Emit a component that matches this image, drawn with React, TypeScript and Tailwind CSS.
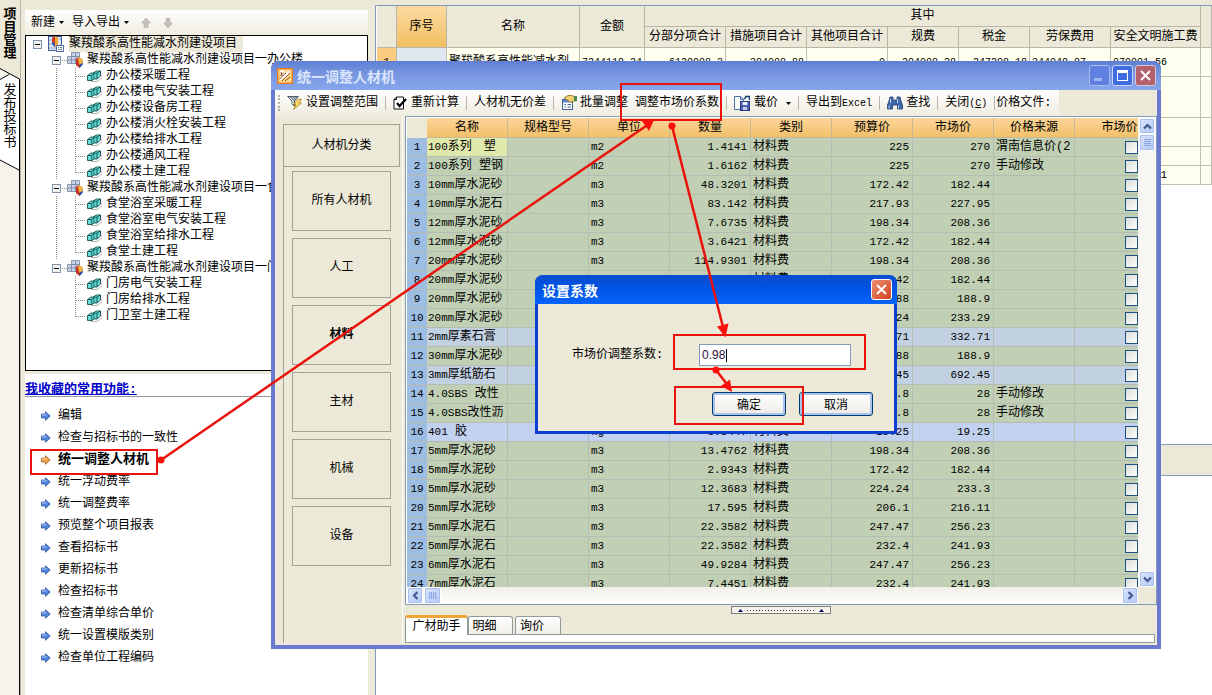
import { Fragment, type ReactNode } from "react";

type Row = {
  pre: string;
  name: string;
  unit: string;
  qty: string;
  budget: string;
  market: string;
  source?: string;
  tone?: "blue" | "sky";
};

const rows: Row[] = [
  { pre: "100",    name: "系列　塑",   unit: "m2", qty: "1.4141",   budget: "225",    market: "270",    source: "渭南信息价(2" },
  { pre: "100",    name: "系列 塑钢",  unit: "m2", qty: "1.6162",   budget: "225",    market: "270",    source: "手动修改" },
  { pre: "10mm",   name: "厚水泥砂",   unit: "m3", qty: "48.3201",  budget: "172.42", market: "182.44" },
  { pre: "10mm",   name: "厚水泥石",   unit: "m3", qty: "83.142",   budget: "217.93", market: "227.95" },
  { pre: "12mm",   name: "厚水泥砂",   unit: "m3", qty: "7.6735",   budget: "198.34", market: "208.36" },
  { pre: "12mm",   name: "厚水泥砂",   unit: "m3", qty: "3.6421",   budget: "172.42", market: "182.44" },
  { pre: "20mm",   name: "厚水泥砂",   unit: "m3", qty: "114.9301", budget: "198.34", market: "208.36" },
  { pre: "20mm",   name: "厚水泥砂",   unit: "m3", qty: "25.3072",  budget: "172.42", market: "182.44" },
  { pre: "20mm",   name: "厚水泥砂",   unit: "m3", qty: "18.2214",  budget: "178.88", market: "188.9" },
  { pre: "20mm",   name: "厚水泥砂",   unit: "m3", qty: "6.4103",   budget: "224.24", market: "233.29" },
  { pre: "2mm",    name: "厚素石膏",   unit: "m3", qty: "1.2086",   budget: "332.71", market: "332.71", tone: "blue" },
  { pre: "30mm",   name: "厚水泥砂",   unit: "m3", qty: "9.7731",   budget: "178.88", market: "188.9" },
  { pre: "3mm",    name: "厚纸筋石",   unit: "m3", qty: "2.1150",   budget: "692.45", market: "692.45", tone: "blue" },
  { pre: "4.0SBS", name: " 改性",      unit: "m2", qty: "342.108",  budget: "26.8",   market: "28",     source: "手动修改" },
  { pre: "4.0SBS", name: "改性沥",     unit: "m2", qty: "518.226",  budget: "26.8",   market: "28",     source: "手动修改" },
  { pre: "401",    name: " 胶",        unit: "kg", qty: "3.5447",   budget: "19.25",  market: "19.25",  tone: "sky" },
  { pre: "5mm",    name: "厚水泥砂",   unit: "m3", qty: "13.4762",  budget: "198.34", market: "208.36" },
  { pre: "5mm",    name: "厚水泥砂",   unit: "m3", qty: "2.9343",   budget: "172.42", market: "182.44" },
  { pre: "5mm",    name: "厚水泥砂",   unit: "m3", qty: "12.3683",  budget: "224.24", market: "233.3" },
  { pre: "5mm",    name: "厚水泥砂",   unit: "m3", qty: "17.595",   budget: "206.1",  market: "216.11" },
  { pre: "5mm",    name: "厚水泥石",   unit: "m3", qty: "22.3582",  budget: "247.47", market: "256.23" },
  { pre: "5mm",    name: "厚水泥石",   unit: "m3", qty: "22.3582",  budget: "232.4",  market: "241.93" },
  { pre: "6mm",    name: "厚水泥石",   unit: "m3", qty: "49.9284",  budget: "247.47", market: "256.23" },
  { pre: "7mm",    name: "厚水泥石",   unit: "m3", qty: "7.4451",   budget: "232.4",  market: "241.93" },
];

const tones = {
  green: "bg-[#c1d0b4]",
  blue: "bg-[#c2d1e2]",
  sky: "bg-[#c1d1ef]",
};

const tree = [
  { title: "聚羧酸系高性能减水剂建设项目一办公楼", leaves: ["办公楼采暖工程", "办公楼电气安装工程", "办公楼设备房工程", "办公楼消火栓安装工程", "办公楼给排水工程", "办公楼通风工程", "办公楼土建工程"] },
  { title: "聚羧酸系高性能减水剂建设项目一食堂",   leaves: ["食堂浴室采暖工程", "食堂浴室电气安装工程", "食堂浴室给排水工程", "食堂土建工程"] },
  { title: "聚羧酸系高性能减水剂建设项目一门房",   leaves: ["门房电气安装工程", "门房给排水工程", "门卫室土建工程"] },
];

const favourites = ["编辑", "检查与招标书的一致性", "统一调整人材机", "统一浮动费率", "统一调整费率", "预览整个项目报表", "查看招标书", "更新招标书", "检查招标书", "检查清单综合单价", "统一设置模版类别", "检查单位工程编码"];

const categories = ["所有人材机", "人工", "材料", "主材", "机械", "设备"];

const gridHeads = ["名称", "规格型号", "单位", "数量", "类别", "预算价", "市场价", "价格来源", "市场价锁定"];

const subHeads = ["分部分项合计", "措施项目合计", "其他项目合计", "规费", "税金", "劳保费用", "安全文明施工费"];

/* ---------- small drawings ---------- */

function Caret() {
  return <svg width="5" height="3" viewBox="0 0 5 3" aria-hidden="true"><path d="M0 0h5L2.5 3z" fill="#000" /></svg>;
}

function FatArrow({ down }: { down?: boolean }) {
  return (
    <svg width="10" height="10" viewBox="0 0 10 10" aria-hidden="true" className={down ? "rotate-180" : ""}>
      <path d="M5 0l4.500 5H7v4.500H3V5H.5z" fill="#c3c1b8" stroke="#aeaca2" strokeWidth=".6" />
    </svg>
  );
}

function Expander() {
  return (
    <svg width="9" height="9" viewBox="0 0 9 9" className="shrink-0" aria-hidden="true">
      <rect x=".5" y=".5" width="8" height="8" fill="#f4f2ec" stroke="#7f93ad" />
      <path d="M2 4.500h5" stroke="#000" />
    </svg>
  );
}

function Dots() {
  return <svg width="6" height="1" viewBox="0 0 6 1" className="shrink-0" aria-hidden="true"><path d="M1 .5h5" stroke="#888" strokeDasharray="1 1" /></svg>;
}

function Guides({ outer, last }: { outer: boolean; last: boolean }) {
  return (
    <svg width="31" height="16" viewBox="0 0 31 16" className="shrink-0" aria-hidden="true">
      {outer && <path d="M.5 0v16" stroke="#888" strokeDasharray="1 1" />}
      <path d={last ? "M19.500 0v9" : "M19.500 0v16"} stroke="#888" strokeDasharray="1 1" />
      <path d="M20 8.500h10" stroke="#888" strokeDasharray="1 1" />
    </svg>
  );
}

function RootIcon() {
  return (
    <svg width="16" height="16" viewBox="0 0 16 16" className="shrink-0" aria-hidden="true">
      <rect x=".5" y=".5" width="13" height="14" fill="#dfe7f5" stroke="#3d5c94" />
      <path d="M1 4h3M1 8h3M1 12h8M11 3h2" stroke="#8aa3cf" />
      <path d="M4 2l3-2 3 2v6l-3 3-3-3z" fill="#d33b22" />
      <path d="M7 0l3 2v6l-3 3z" fill="#f0a92e" />
      <path d="M4 6l3 1v4L4 8z" fill="#2f57b5" />
      <rect x="8.500" y="9.500" width="7" height="6" fill="#fff" stroke="#54709f" />
      <path d="M10 11.500h1M12 11.500h2M10 13.500h1M12 13.500h2" stroke="#54709f" />
    </svg>
  );
}

function GroupIcon() {
  return (
    <svg width="16" height="16" viewBox="0 0 16 16" className="shrink-0" aria-hidden="true">
      <path d="M4.500.5h8v11h-12v-7h4z" fill="#c9d3e4" stroke="#8c9bb5" />
      <path d="M4.500 4.500h8M.5 8h12M4.500 4v8M8.500 1v11" stroke="#7f8fab" />
      <path d="M12 5l3.500 2.500v5L12.500 16 9 13V7z" fill="#c62f1c" />
      <path d="M12 5l3.500 2.500v4L12.500 13 11 8z" fill="#f2b63a" />
      <path d="M12.500 12.500l3-1.500v2l-3 3z" fill="#2d4fae" />
    </svg>
  );
}

function LeafIcon() {
  return (
    <svg width="15" height="12" viewBox="0 0 15 12" className="shrink-0" aria-hidden="true">
      <path d="M4 11.500h6l5-3.500v-4" fill="none" stroke="#b5b5b5" />
      <path d="M.5 5.500L4 3h2l3.500-2h4v5L10 9H7l-2 1.500H.5z" fill="#5fdad6" stroke="#0b3d3d" strokeWidth=".8" />
      <path d="M.5 5.500h4.300v5M4.800 5.500L8 3.500M6 3.200h4L13.500 1M10 3.200V9M7 5.500v3.500" fill="none" stroke="#0b3d3d" strokeWidth=".8" />
    </svg>
  );
}

function ItemArrow({ hot }: { hot?: boolean }) {
  return (
    <svg width="10" height="10" viewBox="0 0 10 10" className="shrink-0" aria-hidden="true">
      <path d="M.5 3h4V.7L9.300 5 4.500 9.300V7h-4z" fill={hot ? "#f0a04a" : "#5384dc"} stroke={hot ? "#a8672a" : "#3257a8"} strokeWidth=".8" />
      <path d="M1 4h4V3" fill="none" stroke={hot ? "#fbd9a8" : "#a9c6f7"} />
    </svg>
  );
}

function AppIcon() {
  return (
    <svg width="16" height="16" viewBox="0 0 16 16" aria-hidden="true">
      <rect x=".7" y=".7" width="14.600" height="14.600" fill="#fbd98a" stroke="#e8781a" strokeWidth="1.400" />
      <path d="M3 3l4-1 1 4 3-3 2 1-4 6-6 2z" fill="#fff" />
      <path d="M2.500 11L9 5M5 13l8-8M4 4l1 4M2.500 8l4-3M8 13l5-4" stroke="#9c4512" />
    </svg>
  );
}

function FilterIcon() {
  return (
    <svg width="16" height="16" viewBox="0 0 16 16" aria-hidden="true">
      <path d="M.7 1.500h10.600L7.500 6v5L5 9V6z" fill="#9aa6b2" stroke="#4b5763" />
      <path d="M2.500 2.500L6 6v3" fill="none" stroke="#fff" />
      <path d="M10.500 4.500h4L11.500 8h3L6.500 14.500l2.500-5H7z" fill="#ffe36b" stroke="#a87f12" strokeWidth=".8" />
    </svg>
  );
}

function CheckDocIcon() {
  return (
    <svg width="14" height="14" viewBox="0 0 14 14" aria-hidden="true">
      <path d="M1 3.500L3.500 1h7v12H1z" fill="#fff" stroke="#111" />
      <path d="M3.500 1v2.500H1" fill="none" stroke="#111" />
      <path d="M4 7l2.500 3L13 3" fill="none" stroke="#000" strokeWidth="2.200" />
    </svg>
  );
}

function BatchIcon() {
  return (
    <svg width="16" height="16" viewBox="0 0 16 16" aria-hidden="true">
      <rect x="1.500" y="4.500" width="10" height="10" fill="#fff" stroke="#3e6494" />
      <rect x="2" y="5" width="9" height="2.500" fill="#5d8cc9" />
      <path d="M3.500 9.500h1.500M6.500 9.500h3.500M3.500 12h1.500M6.500 12h3.500" stroke="#3e6494" />
      <path d="M3 3l4-2.500h4l2 1h2.500V6H12l-2 1.500-3-2z" fill="#f3cf74" stroke="#8d6a1b" strokeWidth=".8" />
      <rect x="13" y="1" width="3" height="5" fill="#4d8f4a" />
    </svg>
  );
}

function LoadIcon() {
  return (
    <svg width="16" height="16" viewBox="0 0 16 16" aria-hidden="true">
      <path d="M.5 1.500h6l3 3v10h-9z" fill="#fff" stroke="#4570ab" />
      <path d="M6.500 1.500v3h3" fill="none" stroke="#4570ab" />
      <path d="M11 1.500h4.500V5M10 4l3-3" stroke="#1d3d7a" strokeWidth="1.500" fill="none" />
      <rect x="6.500" y="6.500" width="9" height="9" fill="#4c5fb3" stroke="#28377d" />
      <rect x="8.500" y="7" width="5" height="3" fill="#e8ecf8" />
      <rect x="9" y="12" width="4" height="3" fill="#c9cfe8" />
    </svg>
  );
}

function BinocularsIcon() {
  return (
    <svg width="16" height="16" viewBox="0 0 16 16" aria-hidden="true">
      <path d="M3 2h3v3h4V2h3l1 4 1.500 4v4h-5v-4h-5v4h-5v-4L2 6z" fill="#4069ad" stroke="#1f3a70" strokeWidth=".8" />
      <path d="M3.500 4v4M2 10.500v3M10.500 4v4M11.500 10.500v3" stroke="#b9d2f5" />
    </svg>
  );
}

function Chevron({ d }: { d: string }) {
  return <svg width="9" height="9" viewBox="0 0 9 9" aria-hidden="true"><path d={d} fill="none" stroke="#41598c" strokeWidth="2.200" /></svg>;
}

// Narrow run of latin letters or digits inside a Chinese label
function Latin({ children }: { children: ReactNode }) {
  return <span className="text-[11px]">{children}</span>;
}

/* ---------- background application ---------- */

function SideRail() {
  return (
    <nav className="relative w-5 shrink-0 bg-[#f5f3eb]">
      <svg width="20" height="695" viewBox="0 0 20 695" className="absolute top-0 left-0" aria-hidden="true">
        <path d="M0 0h20v79L0 68z" fill="#ece9d8" />
        <path d="M0 79l9-4 10 4v91L0 160z" fill="#fff" />
        <path d="M0 68.500l19.500 10.500V695M0 79.500l9-5M0 160l19 10" fill="none" stroke="#000" />
      </svg>
      <div className="relative flex flex-col items-center gap-6 pt-2">
        <button className="w-[13px] text-[13px] leading-[13px] font-bold break-all">项目管理</button>
        <button className="w-[13px] text-[13px] leading-[13px] break-all">发布投标书</button>
      </div>
    </nav>
  );
}

function ProjectPanel() {
  return (
    <aside className="flex w-[348px] shrink-0 flex-col border-l border-[#b8b4a4] bg-[#ece9d8] pl-1">
      <div className="flex h-[10px] items-end justify-center overflow-hidden pb-2 pr-4 leading-4">项目管理</div>
      <div className="flex h-[25px] items-center gap-2 bg-linear-to-b from-white to-[#efecdf] pl-[6px]">
        <button className="flex items-center gap-1">新建 <Caret /></button>
        <button className="flex items-center gap-1">导入导出 <Caret /></button>
        <button aria-label="上移" className="pl-1"><FatArrow /></button>
        <button aria-label="下移" className="pl-1"><FatArrow down /></button>
      </div>

      <div className="h-[336px] overflow-hidden border border-black bg-white leading-4 whitespace-nowrap">
        <div className="flex h-4 items-center gap-[6px] pl-[7px]">
          <Expander />
          <RootIcon />
          <span className="-ml-px bg-[#ece9d8] pr-[6px]">聚羧酸系高性能减水剂建设项目</span>
        </div>
        {tree.map((group, g) => (
          <Fragment key={group.title}>
            <div className="flex h-4 items-center pl-[26px]">
              <Expander />
              <Dots />
              <GroupIcon />
              <span className="pl-1">{group.title}</span>
            </div>
            {group.leaves.map((leaf, i) => (
              <div key={leaf} className="flex h-4 items-center pl-[30px]">
                <Guides outer={g < tree.length - 1} last={i === group.leaves.length - 1} />
                <LeafIcon />
                <span className="pl-1">{leaf}</span>
              </div>
            ))}
          </Fragment>
        ))}
      </div>

      <section className="mt-[3px] grow bg-white">
        <h2 className="h-[23px] border-b border-[#999] pt-[8px] text-[13px] leading-4 font-bold text-[#0000c8]">
          <a href="#fav" className="underline">我收藏的常用功能:</a>
        </h2>
        <ul className="pt-2">
          {favourites.map((item) => {
            const hot = item === "统一调整人材机";
            return (
              <li key={item}>
                <a href="#fav" className="flex h-[22px] items-center gap-[7px] pl-4">
                  <ItemArrow hot={hot} />
                  <span className={hot ? "text-[13px] font-bold" : ""}>{item}</span>
                </a>
              </li>
            );
          })}
        </ul>
      </section>
    </aside>
  );
}

const headCell = "border-r border-b border-[#b9b6a8] p-0 font-normal";
const backCell = "border-r border-b border-[#c0c0b0] p-0";

function SummaryTable() {
  return (
    <table className="w-full table-fixed border-separate border-spacing-0 bg-[#fffff0]">
      <colgroup>
        <col className="w-[20px]" />
        <col className="w-[50px]" />
        <col className="w-[133px]" />
        <col className="w-[65px]" />
        <col className="w-[81px]" />
        <col className="w-[81px]" />
        <col className="w-[81px]" />
        <col className="w-[71px]" />
        <col className="w-[71px]" />
        <col className="w-[81px]" />
        <col className="w-[90px]" />
        <col />
      </colgroup>
      <thead className="bg-[#ece9d8]">
        <tr className="h-[21px]">
          <th rowSpan={2} className={headCell} />
          <th rowSpan={2} className={`${headCell} bg-linear-to-b from-[#fcd9a0] to-[#f0c060]`}>序号</th>
          <th rowSpan={2} className={headCell}>名称</th>
          <th rowSpan={2} className={headCell}>金额</th>
          <th colSpan={7} className={headCell}>其中</th>
          <th rowSpan={2} className={headCell} />
        </tr>
        <tr className="h-[21px] whitespace-nowrap">
          {subHeads.map((h) => <th key={h} className={headCell}>{h}</th>)}
        </tr>
      </thead>
      <tbody>
        <tr className="h-[29px]">
          <th className={`${headCell} bg-[#fbcb80]`}><Latin>1</Latin></th>
          <td className={`${backCell} bg-[#dfe8ee]`} />
          <td className={`${backCell} pl-[2px] leading-[14px]`}>聚羧酸系高性能减水剂</td>
          {["7244119.24", "6120008.3", "304008.88", "0", "204008.28", "247208.18", "344049.07", "870001.56"].map((v, i) => (
            <td key={v} className={`${backCell} px-[2px] text-[10px] ${i < 6 ? "text-right" : "text-left"}`}>{v}</td>
          ))}
          <td className={backCell} />
        </tr>
        {["h-[41px]", "h-[29px]", "h-[19px]", "h-[19px]"].map((h, r) => (
          <tr key={r} className={h}>
            {Array.from({ length: 12 }, (_, c) => (
              <td key={c} className={`${backCell} ${c === 10 ? "pr-[33px] text-right" : ""}`}>{r === 3 && c === 10 ? <Latin>1</Latin> : null}</td>
            ))}
          </tr>
        ))}
      </tbody>
    </table>
  );
}

/* ---------- adjust window ---------- */

function Sep() {
  return <span className="h-[14px] w-px bg-[#b9b6a6]" />;
}

function Toolbar() {
  return (
    <div className="flex h-[26px] bg-[#ece9d8]">
      <div className="flex items-center gap-[7px] bg-linear-to-b from-white to-[#efecdf] pr-2 pl-[3px] whitespace-nowrap">
        <span className="h-4 w-[2px] border-l-2 border-dotted border-[#b5b2a3]" />
        <button className="flex items-center gap-[3px]"><FilterIcon />设置调整范围</button>
        <Sep />
        <button className="flex items-center gap-1"><CheckDocIcon />重新计算</button>
        <Sep />
        <button>人材机无价差</button>
        <Sep />
        <button className="flex items-center gap-[3px]"><BatchIcon />批量调整</button>
        <button>调整市场价系数</button>
        <Sep />
        <button className="flex items-center gap-1"><LoadIcon />载价 <span className="pl-1"><Caret /></span></button>
        <Sep />
        <button>导出到<span className="text-[10px]">Excel</span></button>
        <Sep />
        <button className="flex items-center gap-[3px]"><BinocularsIcon />查找</button>
        <Sep />
        <button>关闭<span className="text-[10px]">(<u>C</u>)</span></button>
        <span className="flex items-center gap-px"><Sep />价格文件:</span>
      </div>
    </div>
  );
}

function CategoryPanel() {
  return (
    <div className="flex w-[128px] shrink-0 border-r border-white pt-2 pl-2">
      <div className="flex grow flex-col border-l border-[#a5a294]">
        <button className="mr-[2px] h-[43px] border border-l-0 border-[#a5a294]">人材机分类</button>
        <div className="flex flex-col gap-[7px] pt-1 pr-[11px] pl-2">
          {categories.map((c) => (
            <button key={c} className={`h-[60px] border border-[#a5a294] ${c === "材料" ? "font-bold" : ""}`}>{c}</button>
          ))}
        </div>
      </div>
    </div>
  );
}

const scrollBtn = "flex items-center justify-center rounded-[2px] border border-white bg-linear-to-br from-[#dbe6fd] to-[#b4c8f6] ring-1 ring-[#a9bfee] ring-inset";
const cell = "overflow-hidden border-r border-b border-[#b4bcb4] p-0 whitespace-nowrap";

function MaterialGrid() {
  return (
    <div className="border border-[#7f9db9] bg-white pt-px pl-px">
      <div className="flex h-[469px]">
        <div className="min-w-0 grow overflow-hidden">
          <table className="w-[782px] table-fixed border-separate border-spacing-0 leading-[14px]">
            <colgroup>
              <col className="w-5" />
              {gridHeads.slice(0, 8).map((h) => <col key={h} className="w-[81px]" />)}
              <col className="w-[114px]" />
            </colgroup>
            <thead>
              <tr className="h-5">
                <th className="bg-[#ece9d8] p-0" />
                {gridHeads.map((h) => (
                  <th key={h} className="border-r border-b border-[#c9b896] bg-linear-to-b from-[#fbd59a] to-[#f2c068] p-0 font-normal">{h}</th>
                ))}
              </tr>
            </thead>
            <tbody>
              {rows.map((r, i) => (
                <tr key={i} className={`h-[19px] ${tones[r.tone ?? "green"]}`}>
                  <th className="border-b border-[#b4bcb4] bg-[#9dbde3] p-0 text-[11px] font-normal">{i + 1}</th>
                  <td className={`${cell} pl-px ${i === 0 ? "bg-[#e0e9ac]" : ""}`}><Latin>{r.pre}</Latin>{r.name}</td>
                  <td className={cell} />
                  <td className={`${cell} pl-[2px] text-[11px]`}>{r.unit}</td>
                  <td className={`${cell} pr-[3px] text-right text-[11px]`}>{r.qty}</td>
                  <td className={`${cell} pl-[2px]`}>材料费</td>
                  <td className={`${cell} pr-[3px] text-right text-[11px]`}>{r.budget}</td>
                  <td className={`${cell} pr-[3px] text-right text-[11px]`}>{r.market}</td>
                  <td className={`${cell} pl-[2px]`}>{r.source}</td>
                  <td className={`${cell} text-center`}>
                    <input type="checkbox" aria-label={`锁定第${i + 1}行`} className="mx-auto block size-[13px] appearance-none border border-[#1c5180] bg-linear-to-br from-[#dcdcd7] to-white" />
                  </td>
                </tr>
              ))}
            </tbody>
          </table>
        </div>
        <div className="flex w-[18px] shrink-0 flex-col bg-[#f7f6f2] px-px">
          <button aria-label="向上" className={`${scrollBtn} h-4`}><Chevron d="M1 6.500l3.500-3.500L8 6.500" /></button>
          <span className={`${scrollBtn} h-[17px]`}>
            <svg width="7" height="8" viewBox="0 0 7 8" aria-hidden="true"><path d="M0 .5h7M0 2.500h7M0 4.500h7M0 6.500h7" stroke="#8aa5e6" /></svg>
          </span>
          <button aria-label="向下" className={`${scrollBtn} mt-auto h-4`}><Chevron d="M1 2.500L4.500 6 8 2.500" /></button>
        </div>
      </div>
      <div className="flex h-[17px]">
        <div className="flex grow gap-px bg-linear-to-b from-[#f1efe8] to-white">
          <button aria-label="向左" className={`${scrollBtn} w-4`}><Chevron d="M6.500 1L3 4.500 6.500 8" /></button>
          <span className={`${scrollBtn} w-[17px]`}>
            <svg width="8" height="7" viewBox="0 0 8 7" aria-hidden="true"><path d="M.5 0v7M2.500 0v7M4.500 0v7M6.500 0v7" stroke="#8aa5e6" /></svg>
          </span>
          <button aria-label="向右" className={`${scrollBtn} ml-auto w-4`}><Chevron d="M2.500 1L6 4.500 2.500 8" /></button>
        </div>
        <div className="w-[18px] bg-[#ece9d8]" />
      </div>
    </div>
  );
}

function BottomTabs() {
  return (
    <>
      <div className="flex h-[10px] items-center justify-center">
        <button aria-label="展开" className="flex h-2 w-[100px] items-center justify-center border border-[#808080] bg-[#f4f2ea]">
          <svg width="86" height="4" viewBox="0 0 86 4" aria-hidden="true">
            <path d="M0 4l2.500-3L5 4zM81 4l2.500-3L86 4z" fill="#00005a" />
            <path d="M9 2.500h68" stroke="#333" strokeDasharray="1 2" />
          </svg>
        </button>
      </div>
      <div className="flex items-end">
        <button className="-mb-px h-5 w-[63px] rounded-t-[3px] border border-t-[3px] border-b-0 border-[#919b9c] border-t-[#f0a536] bg-white leading-4">广材助手</button>
        <button className="mr-[2px] h-[18px] w-[45px] rounded-t-[3px] border border-b-0 border-[#919b9c] bg-linear-to-b from-white to-[#f0eee4] pt-1 pr-3 leading-[13px]">明细</button>
        <button className="h-[18px] w-[46px] rounded-t-[3px] border border-b-0 border-[#919b9c] bg-linear-to-b from-white to-[#f0eee4] pt-1 pr-3 leading-[13px]">询价</button>
      </div>
      <div className="mr-[2px] h-[9px] border border-[#919b9c] bg-white" />
    </>
  );
}

function AdjustWindow() {
  return (
    <section className="absolute top-[61px] left-[271px] w-[890px] rounded-t-lg border-x-4 border-b-4 border-[#6a78d0] bg-[#ece9d8]">
      <header className="-mx-1 flex h-[29px] items-center rounded-t-lg bg-linear-to-b from-[#5f7fd4] via-[#7a98e2] to-[#86a6ec] pr-[5px] pl-[6px]">
        <AppIcon />
        <h1 className="pt-1 pl-1 text-[14px] leading-5 font-bold text-[#dbe5fb]">统一调整人材机</h1>
        <div className="ml-auto flex gap-[2px]">
          <button aria-label="最小化" className="flex size-[21px] items-end rounded-[3px] border border-[#a9bdf0] bg-[#5f80e0] p-1"><span className="h-[3px] w-2 bg-[#9fb5f2]" /></button>
          <button aria-label="最大化" className="flex size-[21px] items-center justify-center rounded-[3px] border border-[#c8d6f8] bg-[#3f6de0]"><span className="size-[11px] border border-t-[3px] border-white" /></button>
          <button aria-label="关闭" className="flex size-[21px] items-center justify-center rounded-[3px] border border-[#d8c8dc] bg-[#b5616d]">
            <svg width="11" height="11" viewBox="0 0 11 11" aria-hidden="true"><path d="M1 1l9 9M10 1l-9 9" stroke="#fff" strokeWidth="2" /></svg>
          </button>
        </div>
      </header>
      <Toolbar />
      <div className="flex pb-[2px]">
        <CategoryPanel />
        <div className="min-w-0 grow pl-[2px]">
          <MaterialGrid />
          <BottomTabs />
        </div>
      </div>
    </section>
  );
}

/* ---------- coefficient dialog ---------- */

function CoefficientDialog() {
  const button = "h-6 w-[74px] rounded-[3px] border border-[#003c74] bg-linear-to-b from-white to-[#ecebe6] pt-[3px] leading-4 ring-2 ring-[#a9c3ee] ring-inset";
  return (
    <section role="dialog" aria-label="设置系数" className="absolute top-[275px] left-[535px] w-[362px] rounded-t-lg border-x-[3px] border-b-[3px] border-[#0a3fd0] bg-[#ece9d8]">
      <header className="-mx-[3px] flex h-[29px] items-center justify-between rounded-t-lg bg-linear-to-b from-[#0a4bd0] via-[#0055e5] to-[#0664fb] pr-[5px] pl-[7px]">
        <h2 className="pt-1 text-[14px] leading-5 font-bold text-white">设置系数</h2>
        <button aria-label="关闭" className="flex size-[21px] items-center justify-center rounded-[3px] border border-white bg-linear-to-br from-[#ee8f70] to-[#cf3f1c]">
          <svg width="11" height="11" viewBox="0 0 11 11" aria-hidden="true"><path d="M1 1l9 9M10 1l-9 9" stroke="#fff" strokeWidth="2" /></svg>
        </button>
      </header>
      <form className="pt-10 pb-[15px]" onSubmit={(e) => e.preventDefault()}>
        <div className="flex items-center justify-between pr-[43px] pl-[34px]">
          <label htmlFor="coef">市场价调整系数:</label>
          <span className="flex h-[22px] w-[152px] items-center border border-[#7f9db9] bg-white">
            <input id="coef" defaultValue="0.98" className="w-[26px] pl-[2px] font-['Liberation_Sans',sans-serif] text-[12px] text-[#301038] outline-none" />
            <span className="h-[13px] w-px bg-black" />
          </span>
        </div>
        <div className="flex justify-end gap-[13px] pt-[26px] pr-[21px]">
          <button type="submit" className={button}>确定</button>
          <button type="button" className={button}>取消</button>
        </div>
      </form>
    </section>
  );
}

// Red boxes and arrows showing the order of the steps
function Annotations() {
  return (
    <svg width="1212" height="695" viewBox="0 0 1212 695" className="pointer-events-none absolute top-0 left-0" aria-hidden="true">
      <g fill="none" stroke="#ea120c" strokeWidth="2">
        <rect x="31" y="450" width="126" height="24" />
        <rect x="621" y="84" width="100" height="36" />
        <rect x="674" y="335" width="191" height="34" />
        <rect x="675" y="387" width="128" height="37" />
      </g>
      <g stroke="#ea120c" strokeWidth="2.500">
        <path d="M161 460L646 126" />
        <path d="M672 126L723 327" />
        <path d="M716 370L726 383" />
      </g>
      <g fill="#fa0f0a">
        <circle cx="161" cy="460" r="3.500" />
        <circle cx="672" cy="126" r="3.500" />
        <circle cx="716" cy="370" r="3.500" />
        <path d="M654 120l-5 11-7-10z" />
        <path d="M725.500 337.500l-8.500-11 11.500-3z" />
        <path d="M732 392l-11-6 9-6.500z" />
      </g>
    </svg>
  );
}

export default function App() {
  return (
    <div className="relative flex h-screen min-h-[695px] overflow-hidden bg-[#ece9d8] font-['Liberation_Mono','Noto_Sans_CJK_SC',monospace] text-[12px] text-black">
      <SideRail />
      <ProjectPanel />
      <main className="ml-[7px] flex min-w-0 grow flex-col pt-[5px]">
        <div className="h-[440px] overflow-hidden border-t border-b border-l border-[#7f9db9] bg-white pl-px">
          <SummaryTable />
        </div>
        <div className="h-[30px]" />
        <div className="grow border-t border-l border-[#7f9db9] bg-white" />
      </main>
      <AdjustWindow />
      <CoefficientDialog />
      <Annotations />
    </div>
  );
}
